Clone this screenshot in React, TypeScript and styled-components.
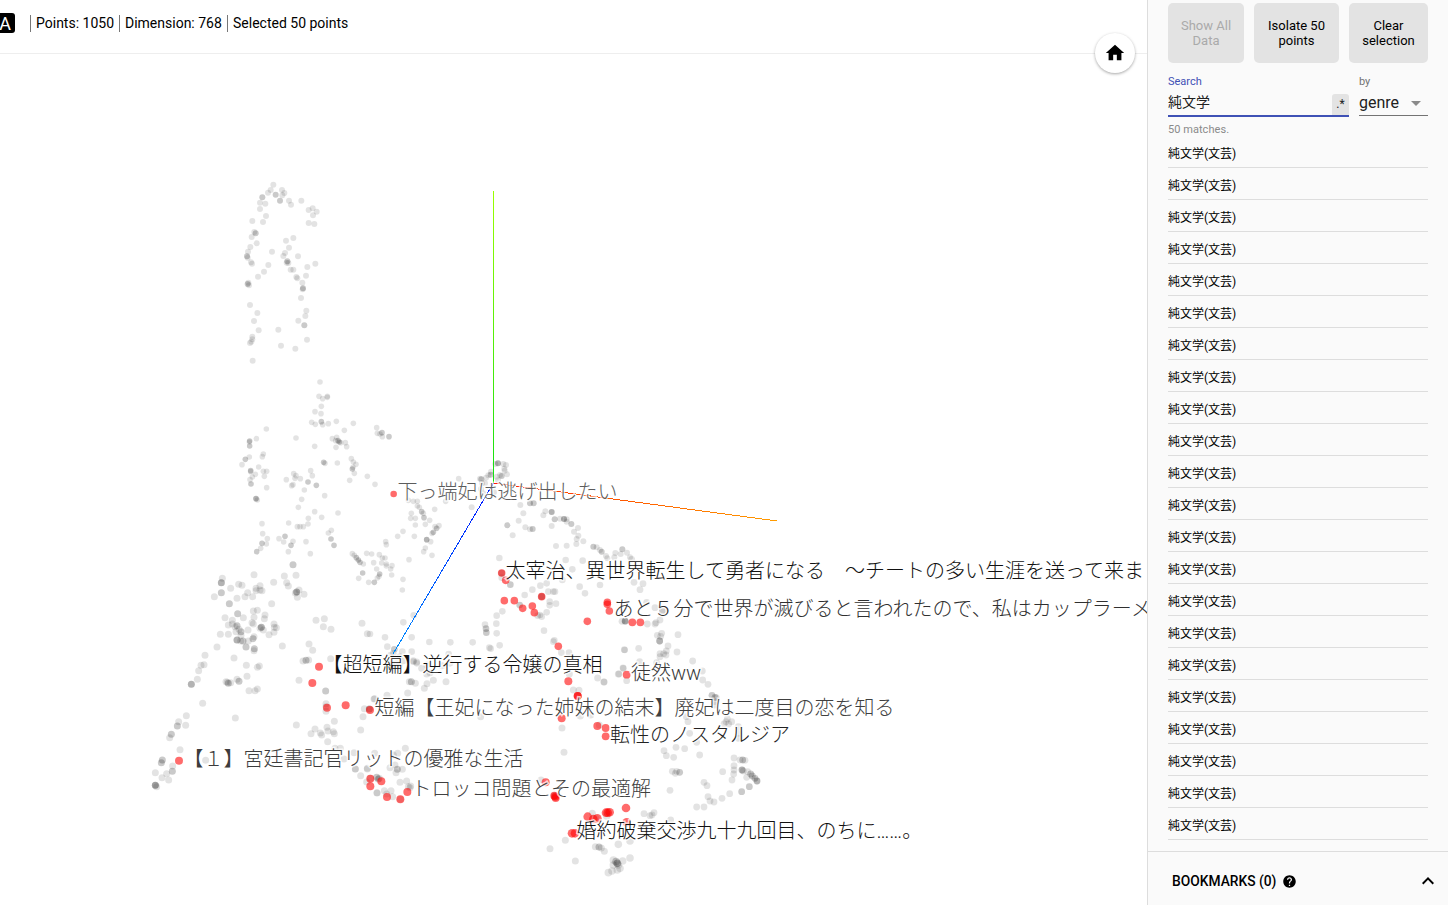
import React from "react";
import styled, { createGlobalStyle } from "styled-components";
import { MdHome, MdHelp, MdExpandLess, MdArrowDropDown } from "react-icons/md";

const Global = createGlobalStyle`
  * { box-sizing: border-box; }
  html, body { margin: 0; padding: 0; overflow: hidden; background: #fff; }
  body { font-family: Roboto, "Noto Sans CJK JP", sans-serif; color: #000; }
  svg { display: block; }
`;

const Shell = styled.div`
  display: flex;
  width: 1448px;
  height: 905px;
`;

const Main = styled.main`
  position: relative;
  width: 1147px;
  display: flex;
  flex-direction: column;
  overflow: hidden;
`;

const StatusBar = styled.header`
  display: flex;
  align-items: flex-start;
  height: 54px;
  padding-top: 13px;
  border-bottom: 1px solid #eee;
`;

const ModeBadge = styled.div`
  width: 15px;
  height: 20px;
  margin-right: 15px;
  border-radius: 0 3px 3px 0;
  background: #000;
  color: #fff;
  font-size: 18px;
  font-weight: 400;
  line-height: 21px;
  display: flex;
  justify-content: flex-end;
  padding-right: 4px;
`;

const Stat = styled.div<{ $width: number }>`
  width: ${(p) => p.$width}px;
  height: 17px;
  margin-top: 2px;
  padding-left: 5px;
  border-left: 1px solid #777;
  font-size: 14px;
  line-height: 17px;
  white-space: nowrap;
`;

const HomeButton = styled.button`
  position: absolute;
  left: 1095px;
  top: 33px;
  width: 40px;
  height: 40px;
  padding: 0;
  border: 0;
  border-radius: 50%;
  background: #fff;
  box-shadow: 0 1px 3px rgba(0, 0, 0, 0.35);
  display: flex;
  align-items: center;
  justify-content: center;
`;

const Plot = styled.svg`
  width: 1147px;
  height: 851px;
`;

const PlotLabel = styled.text`
  font-family: Roboto, "Noto Sans CJK JP", sans-serif;
  font-size: 20px;
  font-weight: 300;
  stroke: rgba(255, 255, 255, 0.72);
  stroke-width: 3px;
  paint-order: stroke;
`;

const Panel = styled.aside`
  width: 301px;
  display: flex;
  flex-direction: column;
  border-left: 1px solid #ddd;
  background: #fafafa;
`;

const Inspector = styled.div`
  height: 851px;
  padding: 3px 20px 0;
`;

const ButtonRow = styled.div`
  display: flex;
  gap: 10px;
`;

const ActionButton = styled.button<{ $width: number }>`
  width: ${(p) => p.$width}px;
  height: 60px;
  padding: 0 8px;
  border: 0;
  border-radius: 5px;
  background: #e3e3e3;
  color: #000;
  font-family: Roboto, sans-serif;
  font-size: 13px;
  line-height: 15px;
  &:disabled { color: #aaa; }
`;

const FieldRow = styled.div`
  display: flex;
  gap: 10px;
  margin-top: 11px;
`;

const Field = styled.div<{ $width: number }>`
  width: ${(p) => p.$width}px;
`;

const FieldLabel = styled.div<{ $active?: boolean }>`
  height: 15px;
  font-size: 11px;
  line-height: 15px;
  color: ${(p) => (p.$active ? "#3f51b5" : "#737373")};
`;

const FieldValue = styled.div<{ $active?: boolean; $size: number }>`
  display: flex;
  align-items: center;
  justify-content: space-between;
  height: ${(p) => (p.$active ? 28 : 27)}px;
  padding-top: ${(p) => (p.$active ? 0 : 2)}px;
  border-bottom: ${(p) => (p.$active ? "2px solid #3f51b5" : "1px solid #737373")};
  font-size: ${(p) => p.$size}px;
  line-height: 26px;
  color: #212121;
`;

const RegexToggle = styled.span`
  width: 17px;
  height: 21px;
  margin-top: 5px;
  border-radius: 3px 3px 0 0;
  background: #e3e3e3;
  font-size: 12px;
  line-height: 20px;
  text-align: center;
`;

const MatchCount = styled.div`
  height: 19px;
  font-size: 11px;
  line-height: 26px;
  letter-spacing: 0.05px;
  color: #8a8a8a;
`;

const Match = styled.div`
  height: 32px;
  border-bottom: 1px solid #ddd;
  font-size: 12px;
  line-height: 37px;
`;

const Bookmarks = styled.div`
  flex: 1;
  display: flex;
  align-items: center;
  padding: 5px 8px 0 24px;
  border-top: 1px solid #ddd;
  font-size: 13.8px;
  font-weight: 500;
  gap: 6px;
`;

const ExpandIcon = styled(MdExpandLess)`
  margin-left: auto;
`;

type Cluster = { x: number; y: number; r: number; gray: string; red?: string };

/* Points are listed per cluster in thirds of a pixel; "*n" marks n coincident points. */
const clusters: Cluster[] = [
  {
    x: 220, y: 170, r: 3,
    gray: "160,44 152,60 144,68 127,82*2 120,98 136,101 120,117 138,138 97,153 129,156 186,60 193,69 187,76 180,92*2 167,74*2 207,92 213,104 244,92 278,115 266,120 290,125 279,136 266,159 283,162 107,190*2 103,186 95,201 110,220 91,231 84,245 81,259*2 83,263 93,277 96,281 156,245 145,285 132,305 114,320 85,338 83,342*2 87,346 90,405 112,429 102,453 116,481 97,500 97,508 94,515 90,519 98,572 183,527 226,536 261,509 175,479 198,212 220,204 207,233 195,249 190,258 202,274*2 200,278 205,279 234,259 212,299 220,299 262,291 286,281 229,321 232,325 258,317 247,338 249,355*2 248,358 243,384 259,422 256,438 235,452 253,466*2",
  },
  {
    x: 220, y: 370, r: 2.8,
    gray: "300,36 297,79 322,79 308,86 322,82 304,109 285,125 303,131 275,157 286,163 304,155*2 308,164 325,161 349,154 400,160 373,181 139,177 109,206 89,213*2 89,228*2 88,216 228,204 284,229 337,206 350,202 347,212 354,212*2 358,216*2 362,218 376,218 380,230 348,232 470,173 472,190 486,188*2 480,192 487,200 507,200*2 130,252 127,260 88,261 76,268*2 66,284 116,291 92,302*2 92,305 106,313 97,321 90,329 93,342*2 130,304 140,304 133,319 140,353 108,386*3 112,390 221,311 228,317 225,325 241,326 199,329 219,344 215,347 272,302 277,317 264,336*2 289,346*2 253,360 245,388 235,412 311,277*2 315,280 352,279 394,266 400,276 408,283 397,297*2 399,292 403,310 389,331 442,319 465,343 314,377 284,425 305,442 354,429 265,445 264,462 250,470 232,470 240,470 206,459 126,461 128,491 142,506 126,520*2 139,522 122,535 110,545*2 177,506 195,499*2 191,516 219,514 213,526*2 205,545 258,515 271,551 334,481 325,489 333,507*2 342,526*2 716,326 565,391 580,394 592,394 592,408 598,412 605,425*2 610,430 612,443*2 574,430 572,445 586,445 586,465 616,463 629,451 644,418 677,394 657,467 650,475*2 645,470 640,487*2 636,490 620,509*3 632,515 583,499 549,484 533,499 497,515 499,524 616,534 611,545 636,556 567,569 397,551 403,556 409,563*2 415,570*2 420,577*2 430,582 440,550 455,552 461,578 478,554 487,564 495,564 485,579 499,582 499,588 516,587 512,597 470,597 428,609*2 416,625 479,612*2 477,619 472,624 463,637*2 446,637 515,615 549,628 547,660",
    red: "521,372",
  },
  {
    x: 140, y: 560, r: 3.5,
    gray: "459,14*2 342,44 433,48 468,46 401,67 247,55 244,68*3 244,98*2 223,110 268,131*2 272,85 296,73 306,76 323,98 291,115 315,110 338,110 348,85 360,77 348,92 366,92 360,90 395,131 440,68 445,78 477,90 470,96*3 466,99 472,112 492,103 293,161*2 310,173 340,153 352,151 342,172 375,165 373,176 255,173 265,195 277,181 277,192 291,197*2 285,200 297,208 303,215*2 288,215 324,210 336,188 340,192 364,202*3 360,205 370,210 402,192 403,202 409,203 402,217 387,224 241,223 265,223 303,226 291,240*3 302,243 309,243*2 325,243 339,236*2 342,230 318,261*2 343,266*2 342,272 231,261 282,294 195,286 183,316 192,314 176,332 172,358 154,373*3 319,316 352,322 358,318 321,349 262,367 265,370*2 272,368 258,365 291,358 297,364*2 327,392 345,392 352,387 427,258 528,181 553,176 550,200 573,208 666,190 682,221 507,252 518,271 498,301*2 506,300 489,303 572,296 477,361 557,393*2 558,431 558,440 558,454 673,446 688,447*3 669,470 662,510 704,416 188,430 286,474 469,495 139,467 116,485 112,498*2 137,496 94,523*2 89,533 120,569 67,600*2 64,608*2 98,618 97,634*2 46,638 66,653 80,641 86,660 46,676*4 50,680 197,601 525,507 513,521 541,519 545,525 561,502 564,513 580,515 583,521 583,484 563,545 585,565 601,565 612,597 642,578 646,627*2 682,627 662,647 704,580 711,699 715,657*2 680,666",
    red: "537,320 517,369 561,443 617,436 690,450 117,602 691,656 691,679",
  },
  {
    x: 370, y: 450, r: 3,
    gray: "376,42 384,40*3 400,42 408,45 403,56 404,62 395,78*2 390,75 411,73 363,65 362,74*2 355,76 348,83 334,88*2 330,86 336,100 333,117 339,130 372,127 384,90 345,100 380,80 305,172 451,165 480,160*2 491,160*2 460,190 446,212 412,226*2 466,232 480,238 488,237*2 428,256 520,196 526,184 545,186*3 554,208*2 570,206 582,207*3 590,208 590,215 604,222*2 545,228 624,234 612,245 625,257 620,267 640,274 619,282 590,287 558,288 670,290*2 680,292 695,305*2 690,300 708,318 712,325 736,309 733,322 757,298*2 771,308 780,322 752,312",
  },
  {
    x: 370, y: 450, r: 3.3,
    gray: "388,324 587,330 638,332 607,358 577,390 530,400 511,407 487,419 464,435 421,404*2 395,383 395,369*2 515,440*3 535,425 555,425 550,425 539,455 558,461 539,466 530,487 515,500 503,497 510,495 449,465*2 629,410 690,405 645,430 397,484 380,497 379,521 380,550 345,524 348,536*2 349,548*2 358,593 362,596 389,586 522,542 553,571 550,575 574,608 597,608 308,577 241,577 178,576 125,562 100,517 131,496 45,562 52,590 73,598*2 70,610 62,615 97,605 125,605 130,635 236,612 240,640 0,552 90,620 765,513*2 764,600 760,655 140,640 100,633 80,640",
    red: "395,369 407,391 403,452 433,452 458,475 487,468 493,488 515,440 565,589 652,514 712,457 712,463 718,483",
  },
  {
    x: 600, y: 540, r: 3.4,
    gray: "95,58 102,127 129,131 120,149 140,187 73,329 116,325 165,203 187,213*2 180,240 168,248 165,252 142,252 185,280 172,286 182,289 179,303*3 234,284 204,318 231,336 199,333 180,341 191,341 198,345 180,350 119,365 170,368 69,384 57,402 80,422 12,426 278,363 307,393 308,420 324,433 336,466*2 345,472*2 349,473 345,485 343,495 382,537 395,545 378,545 386,552 372,552 415,560 415,580 415,595 259,530 264,545 269,580 290,607 228,622 254,626 299,645 192,632 199,647 221,652 217,694 226,700 239,697*2 230,694 210,751 312,727 321,737 368,695 402,654 420,660 428,660*2 435,661 402,677 402,690 401,702 396,720 426,690*3 430,693 443,695 452,702*2 457,708*2 465,715*2 471,723*3 440,712 448,740*2 425,755*2 389,761 366,775 324,770 330,783 342,786 290,801 312,801 132,821 162,818 150,827 156,825 212,840 66,244 76,244*2",
    red: "97,247 121,247 80,404 17,564 17,589",
  },
  {
    x: 360, y: 640, r: 3.5,
    gray: "95,72 118,75 160,62 170,66 185,85 201,75 246,77 200,102 210,98 154,125*2 148,125 166,130 201,131 220,121 258,125 193,145 143,159 81,166 42,177 628,102 713,114 732,126 775,102 640,150 657,151 654,168 606,264 718,255 362,230 661,228 692,225 612,337 136,325 113,340 100,345 105,375 112,388*2 108,398 90,383 127,388 22,385 50,412*2 58,415 120,427 140,423 145,440 150,443 152,438 51,458 93,452 73,452 80,462 98,470 31,415 121,478 583,467*2 543,420 697,520 708,535 616,601 570,626 646,663 717,621*2 724,624 733,634 706,620",
    red: "625,124 653,168*2 605,235 712,258 64,424 81,471 121,478 142,456 557,427 583,467 587,474 586,470",
  },
  {
    x: 530, y: 770, r: 3.8,
    gray: "262,280*3 258,275*2 265,285 270,295 262,300 246,303 235,308 250,270 250,285 278,273 300,264 300,213 265,223 230,138",
    red: "173,140 190,147 202,145 228,128 233,128 239,127 126,190 135,190 288,114 290,157",
  },
];

const palette = { gray: "rgba(0,0,0,0.11)", red: "rgba(255,0,0,0.58)" };

function dots(c: Cluster, kind: "gray" | "red") {
  const out: React.ReactNode[] = [];
  (c[kind] || "").split(" ").filter(Boolean).forEach((token, i) => {
    const [pos, n] = token.split("*");
    const [px, py] = pos.split(",").map(Number);
    const r = kind === "red" ? c.r + 0.5 : c.r;
    for (let k = 0; k < Number(n || 1); k++) {
      out.push(
        <circle key={`${i}-${k}`} cx={c.x + px / 3} cy={c.y + py / 3} r={r} fill={palette[kind]} />
      );
    }
  });
  return out;
}

const labels = [
  { x: 397.5, y: 491, fill: "#5c5c5c", text: "下っ端妃は逃げ出したい" },
  { x: 505.5, y: 570, fill: "#111", text: "太宰治、異世界転生して勇者になる　～チートの多い生涯を送って来ま" },
  { x: 613.5, y: 608, fill: "#303030", text: "あと５分で世界が滅びると言われたので、私はカップラーメ" },
  { x: 322.5, y: 664, fill: "#111", text: "【超短編】逆行する令嬢の真相" },
  { x: 631, y: 672, fill: "#383838", text: "徒然ww" },
  { x: 374.5, y: 707, fill: "#404040", text: "短編【王妃になった姉妹の結末】廃妃は二度目の恋を知る" },
  { x: 610, y: 734, fill: "#222", text: "転性のノスタルジア" },
  { x: 183.5, y: 758, fill: "#3c3c3c", text: "【１】宮廷書記官リットの優雅な生活" },
  { x: 411.5, y: 788, fill: "#404040", text: "トロッコ問題とその最適解" },
  { x: 576.5, y: 830, fill: "#111", text: "婚約破棄交渉九十九回目、のちに……。" },
];

const matches = Array.from({ length: 22 }, () => "純文学(文芸)");

export default function App() {
  return (
    <Shell>
      <Global />
      <Main>
        <StatusBar>
          <ModeBadge>A</ModeBadge>
          <Stat $width={89}>Points: 1050</Stat>
          <Stat $width={108}>Dimension: 768</Stat>
          <Stat $width={130}>Selected 50 points</Stat>
        </StatusBar>
        <Plot viewBox="0 54 1147 851">
          <defs>
            <linearGradient id="axisX" gradientUnits="userSpaceOnUse" x1="493" y1="483" x2="777" y2="521">
              <stop offset="0" stopColor="#ff2000" />
              <stop offset="1" stopColor="#ff9c00" />
            </linearGradient>
            <linearGradient id="axisY" gradientUnits="userSpaceOnUse" x1="493" y1="483" x2="493" y2="191">
              <stop offset="0" stopColor="#10e010" />
              <stop offset="1" stopColor="#99ff00" />
            </linearGradient>
            <linearGradient id="axisZ" gradientUnits="userSpaceOnUse" x1="493" y1="483" x2="393" y2="654">
              <stop offset="0" stopColor="#0010ff" />
              <stop offset="1" stopColor="#0090ff" />
            </linearGradient>
          </defs>
          {clusters.map((c, i) => <g key={i}>{dots(c, "gray")}</g>)}
          {clusters.map((c, i) => <g key={i}>{dots(c, "red")}</g>)}
          <g shapeRendering="crispEdges" strokeWidth="1">
            <line x1="493.5" y1="483" x2="777" y2="521" stroke="url(#axisX)" />
            <path d="M493 191h1v292h-1z" fill="url(#axisY)" />
            <line x1="493.5" y1="483" x2="393" y2="654" stroke="url(#axisZ)" />
          </g>
          {labels.map((l) => (
            <PlotLabel key={l.y} x={l.x} y={l.y + 7.5} fill={l.fill}>{l.text}</PlotLabel>
          ))}
        </Plot>
        <HomeButton aria-label="Reset view"><MdHome size={22} /></HomeButton>
      </Main>
      <Panel>
        <Inspector>
          <ButtonRow>
            <ActionButton $width={76} disabled>Show All Data</ActionButton>
            <ActionButton $width={85}>Isolate 50 points</ActionButton>
            <ActionButton $width={79}>Clear selection</ActionButton>
          </ButtonRow>
          <FieldRow>
            <Field $width={181}>
              <FieldLabel $active>Search</FieldLabel>
              <FieldValue $active $size={14}>純文学<RegexToggle>.*</RegexToggle></FieldValue>
            </Field>
            <Field $width={69}>
              <FieldLabel>by</FieldLabel>
              <FieldValue $size={16}>genre<MdArrowDropDown size={24} color="#8a8a8a" /></FieldValue>
            </Field>
          </FieldRow>
          <MatchCount>50 matches.</MatchCount>
          {matches.map((m, i) => <Match key={i}>{m}</Match>)}
        </Inspector>
        <Bookmarks>
          BOOKMARKS (0)
          <MdHelp size={15} />
          <ExpandIcon size={24} />
        </Bookmarks>
      </Panel>
    </Shell>
  );
}
